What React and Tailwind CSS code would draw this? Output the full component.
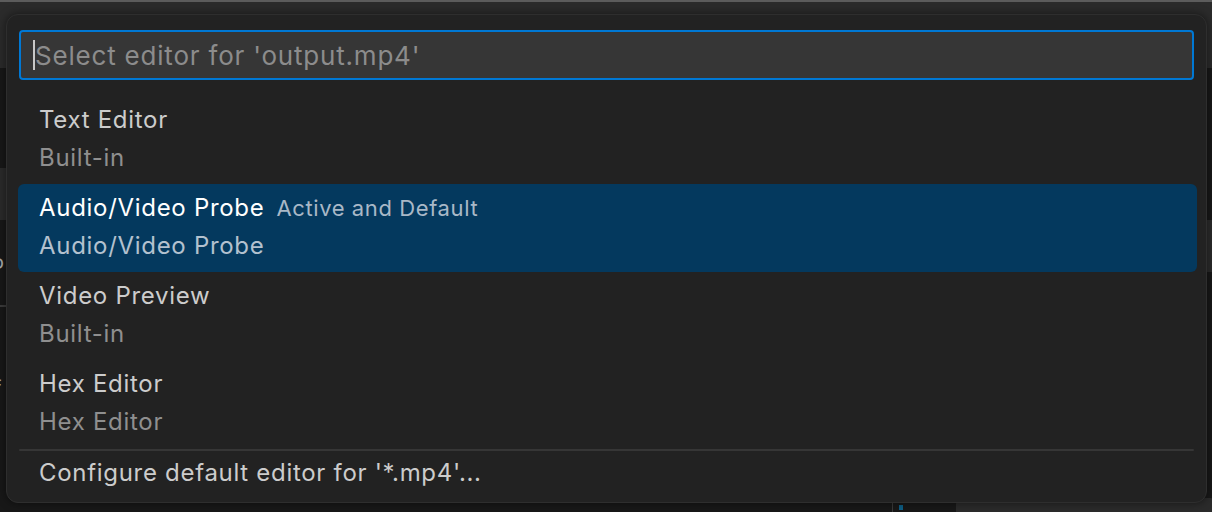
import React from "react";

const font = { fontFamily: "Inter, 'Noto Sans', sans-serif" };

function Row({ label, desc, extra, active }) {
  return (
    <div
      className={
        "ml-[11px] mr-[9px] h-[88px] rounded-[6px] px-[21px] pt-[5px] flex flex-col tracking-[0.7px] " +
        (active ? "bg-[#04395e]" : "")
      }
    >
      <div className="h-[38px] flex items-center gap-[12px]">
        <span className={"text-[24px] " + (active ? "text-white" : "text-[#cccccc]")}>{label}</span>
        {extra && <span className="text-[22px] tracking-[0.6px] text-[#a9b8c7]">{extra}</span>}
      </div>
      <div className={"h-[38px] flex items-center text-[24px] " + (active ? "text-[#b3c1cf]" : "text-[#8f8f8f]")}>
        {desc}
      </div>
    </div>
  );
}

export default function App() {
  return (
    <div className="relative w-[1212px] h-[512px] overflow-hidden bg-[#181818]" style={font}>
      {/* underlying window */}
      <div className="h-[2px] bg-[#5c5c5c]" />
      <div className="h-[66px] bg-[#2b2b2b]" />
      <div className="flex h-[444px]">
        <div className="w-[6px] flex flex-col overflow-hidden">
          <div className="h-[100px] bg-[#181818]" />
          <div className="h-[52px] bg-[#2b2b2b]" />
          <div className="h-[85px] bg-[#181818] text-[#aaaaaa] text-[20px] leading-[85px] -ml-[8px]">o</div>
          <div className="h-[2px] bg-[#3c3c3c]" />
          <div className="flex-1 bg-[#181818] text-[#aaaaaa] text-[20px] pt-[66px] -ml-[6px]">f</div>
        </div>
        <div className="flex-1" />
        <div className="w-[6px] flex flex-col">
          <div className="h-[152px] bg-[#181818]" />
          <div className="h-[52px] bg-[#2b2b2b]" />
          <div className="flex-1 bg-[#181818]" />
        </div>
      </div>
      <div className="absolute left-[892px] top-[502px] w-[1px] h-[10px] bg-[#3a3a3a]" />
      <div className="absolute left-[899px] top-[505px] w-[4px] h-[5px] bg-[#0e5e85]" />
      <div className="absolute left-[956px] top-[498px] w-[260px] h-[20px] rounded-[6px] bg-[#2b2b2b]" />

      {/* quick pick */}
      <div className="absolute left-[6px] top-[14px] w-[1201px] h-[489px] rounded-[12px] bg-[#222222] border border-[#2e2e2e] shadow-[0_0_8px_rgba(0,0,0,0.5)] flex flex-col">
        <div className="mx-[12px] mt-[15px] h-[50px] rounded-[4px] border-2 border-[#0078d4] bg-[#363636] flex items-center pl-[12px]">
          <div className="w-[2px] h-[30px] bg-[#c8c8c8]" />
          <span className="text-[26px] tracking-[0.8px] text-[#8c8c8c]">Select editor for 'output.mp4'</span>
        </div>
        <div className="h-[16px]" />
        <Row label="Text Editor" desc="Built-in" />
        <Row label="Audio/Video Probe" desc="Audio/Video Probe" extra="Active and Default" active />
        <Row label="Video Preview" desc="Built-in" />
        <Row label="Hex Editor" desc="Hex Editor" />
        <div className="mx-[12px] mt-[1px] h-[2px] bg-[#363636] rounded" />
        <div className="h-[44px] flex items-center px-[32px] text-[24px] tracking-[0.7px] text-[#cccccc]">
          Configure default editor for '*.mp4'...
        </div>
      </div>
    </div>
  );
}
